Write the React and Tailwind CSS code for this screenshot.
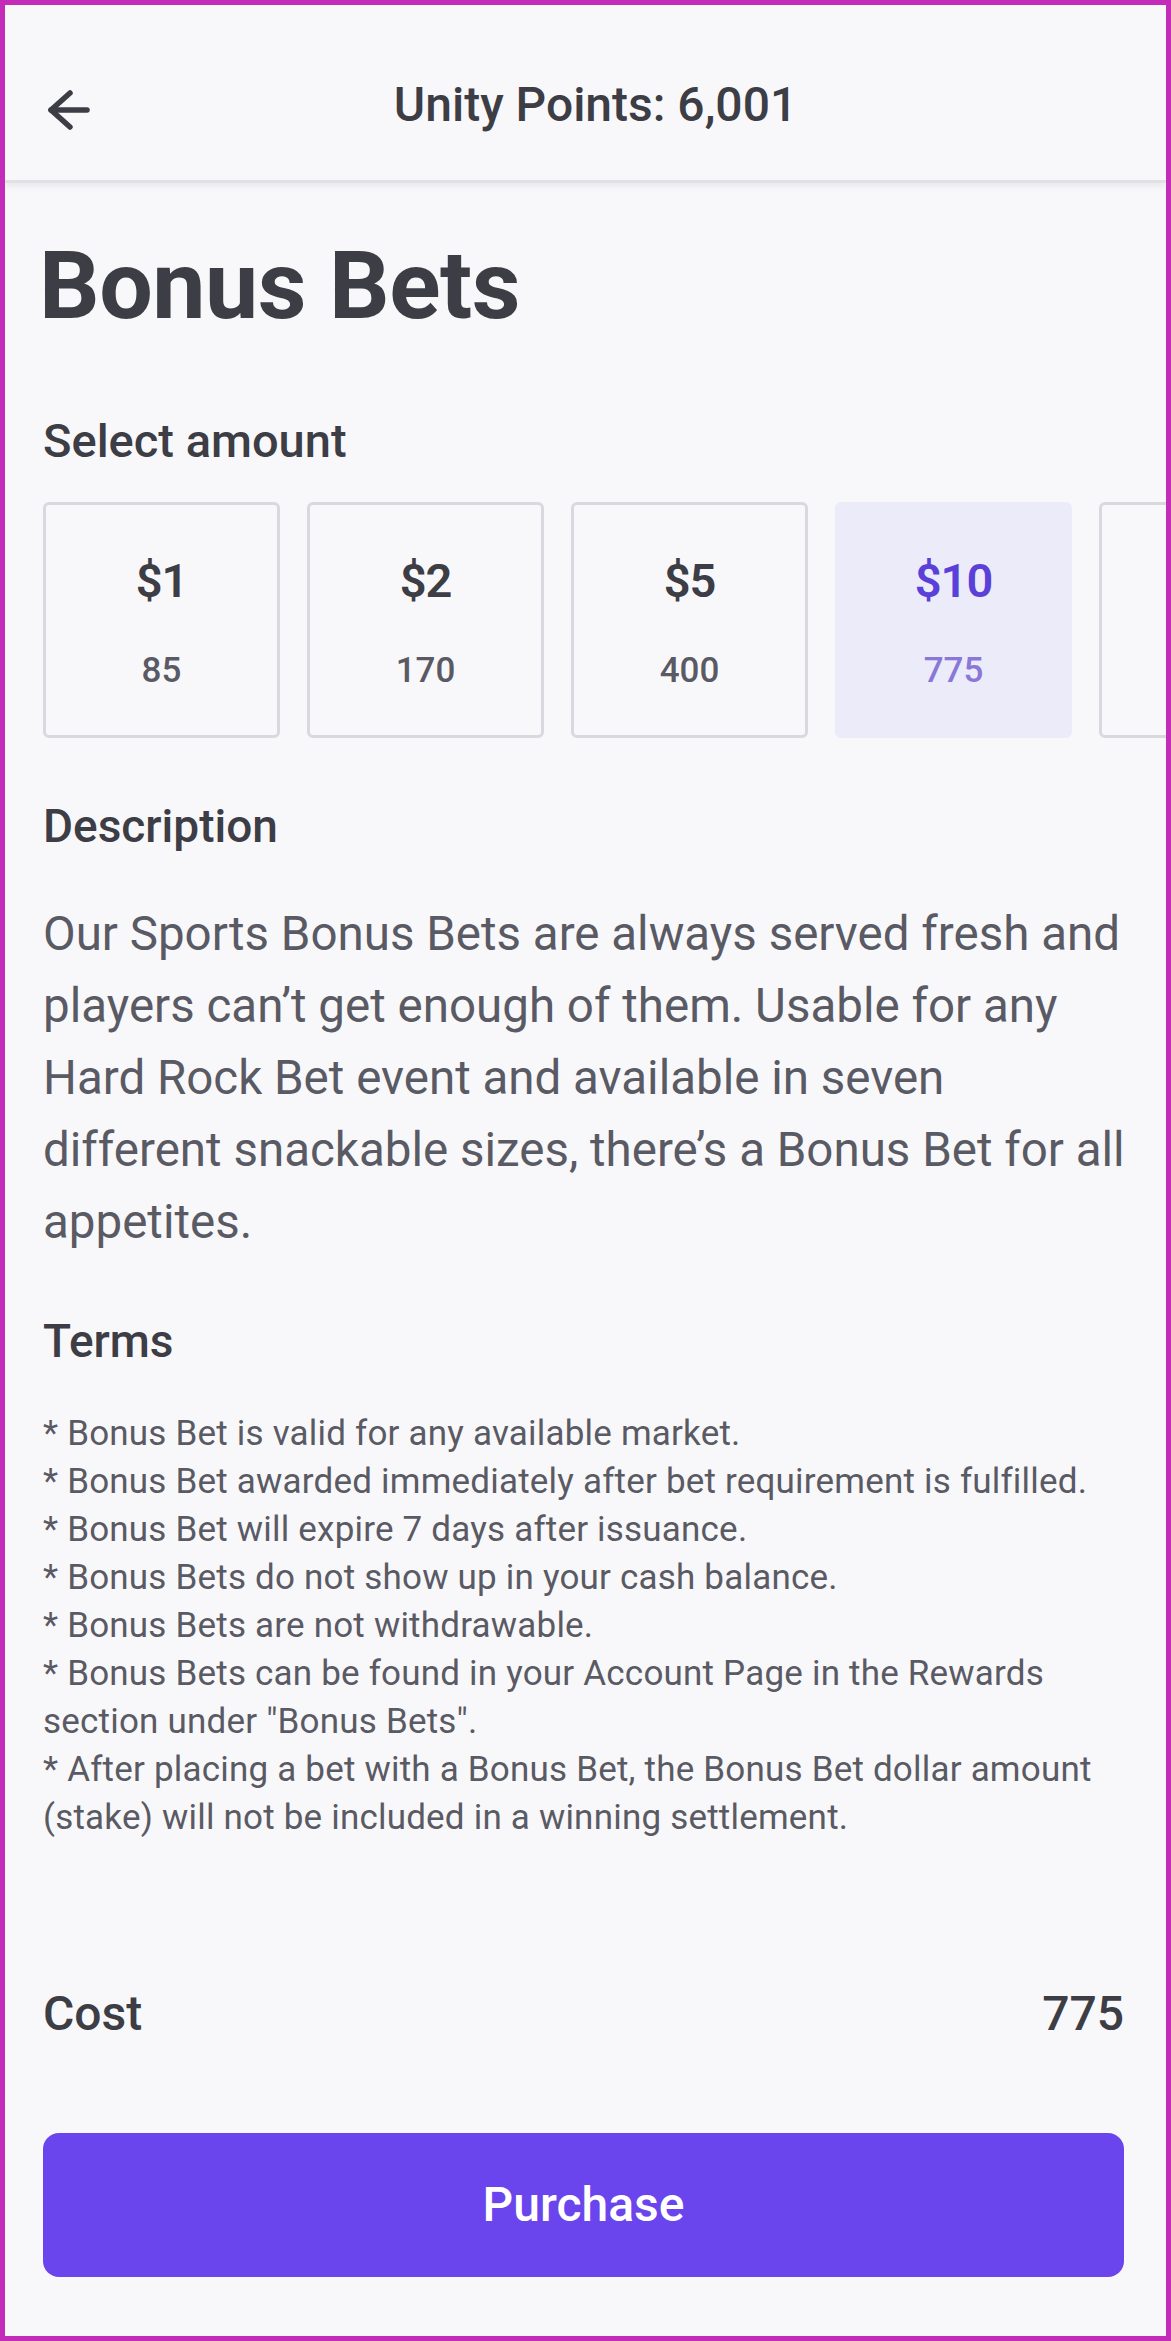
import React from 'react';

const AMOUNTS = [
  { label: '$1', points: '85' },
  { label: '$2', points: '170' },
  { label: '$5', points: '400' },
  { label: '$10', points: '775', selected: true },
];

const TERMS = [
  '* Bonus Bet is valid for any available market.',
  '* Bonus Bet awarded immediately after bet requirement is fulfilled.',
  '* Bonus Bet will expire 7 days after issuance.',
  '* Bonus Bets do not show up in your cash balance.',
  '* Bonus Bets are not withdrawable.',
  '* Bonus Bets can be found in your Account Page in the Rewards',
  'section under "Bonus Bets".',
  '* After placing a bet with a Bonus Bet, the Bonus Bet dollar amount',
  '(stake) will not be included in a winning settlement.',
];

const DESCRIPTION = [
  'Our Sports Bonus Bets are always served fresh and',
  'players can\u2019t get enough of them. Usable for any',
  'Hard Rock Bet event and available in seven',
  'different snackable sizes, there\u2019s a Bonus Bet for all',
  'appetites.',
];

function BackArrow() {
  return (
    <svg width="48" height="48" viewBox="0 0 48 48" fill="none" stroke="#3d3d45" strokeWidth="5.5" strokeLinecap="round" strokeLinejoin="round">
      <path d="M25 6 L6 23 L25 40" />
      <path d="M6 23 H42" />
    </svg>
  );
}

function AmountCard({ label, points, selected }) {
  return (
    <div
      className={
        selected
          ? 'w-[237px] h-[236px] shrink-0 rounded-[6px] border-[3px] border-[#ecebf9] bg-[#ecebf9] flex flex-col items-center pt-[48px]'
          : 'w-[237px] h-[236px] shrink-0 rounded-[6px] border-[3px] border-[#d8d8de] bg-[#f8f8fa] flex flex-col items-center pt-[48px]'
      }
    >
      <div className={selected ? 'text-[47px] leading-[56px] font-semibold text-[#5a3fd8] tracking-[-1px]' : 'text-[47px] leading-[56px] font-semibold text-[#3d3d45] tracking-[-1px]'}>
        {label}
      </div>
      <div className={selected ? 'mt-[41px] text-[35px] leading-[42px] font-medium text-[#8a78d8]' : 'mt-[41px] text-[35px] leading-[42px] font-medium text-[#5a5a64]'}>
        {points}
      </div>
    </div>
  );
}

export default function App() {
  return (
    <div
      className="w-[1171px] h-[2341px] border-[5px] border-[#c22cb8] bg-[#f8f8fa] flex flex-col overflow-hidden text-[#3d3d45]"
      style={{ fontFamily: 'Roboto, "Noto Sans", sans-serif' }}
    >
      {/* Header */}
      <header className="h-[178px] shrink-0 pt-[25px] border-b-[3px] border-[#e0e0e5] shadow-[0_4px_6px_rgba(0,0,0,0.06)] bg-[#f8f8fa] grid grid-cols-[1fr_auto_1fr] items-center">
        <div className="pl-[40px] pt-[12px]">
          <BackArrow />
        </div>
        <div className="pl-[20px] text-[48px] leading-[56px] font-medium text-[#3d3d45]">Unity Points: 6,001</div>
        <div />
      </header>

      <main className="flex flex-col pl-[38px] pr-[42px]">
        <h1 className="mt-[55px] -ml-[4px] text-[95px] leading-[95px] font-bold tracking-[-0.5px] text-[#3d3d45]">Bonus Bets</h1>

        <h2 className="mt-[80px] text-[47px] leading-[56px] font-medium">Select amount</h2>

        <div className="mt-[33px] flex gap-[27px] -mr-[60px]">
          {AMOUNTS.map((a) => (
            <AmountCard key={a.label} {...a} />
          ))}
          {/* next card, scrolled past the edge */}
          <div className="w-[237px] h-[236px] shrink-0 rounded-[6px] border-[3px] border-[#d8d8de] bg-[#f8f8fa]" />
        </div>

        <h2 className="mt-[60px] text-[46px] leading-[56px] font-medium">Description</h2>

        <p className="mt-[44px] text-[47.5px] leading-[72px] text-[#5a5a64] whitespace-nowrap">
          {DESCRIPTION.map((line) => (
            <span key={line} className="block">{line}</span>
          ))}
        </p>

        <h2 className="mt-[55px] text-[46px] leading-[56px] font-medium">Terms</h2>

        <div className="mt-[41px] text-[35px] leading-[48px] tracking-[0.2px] text-[#5a5a64] whitespace-nowrap">
          {TERMS.map((line) => (
            <div key={line}>{line}</div>
          ))}
        </div>

        <div className="mt-[144px] flex items-center justify-between text-[48px] leading-[56px] font-medium">
          <span>Cost</span>
          <span>775</span>
        </div>

        <button className="mt-[91px] h-[144px] w-full rounded-[16px] bg-[#6a45ee] text-white text-[48px] font-medium">
          Purchase
        </button>
      </main>
    </div>
  );
}
